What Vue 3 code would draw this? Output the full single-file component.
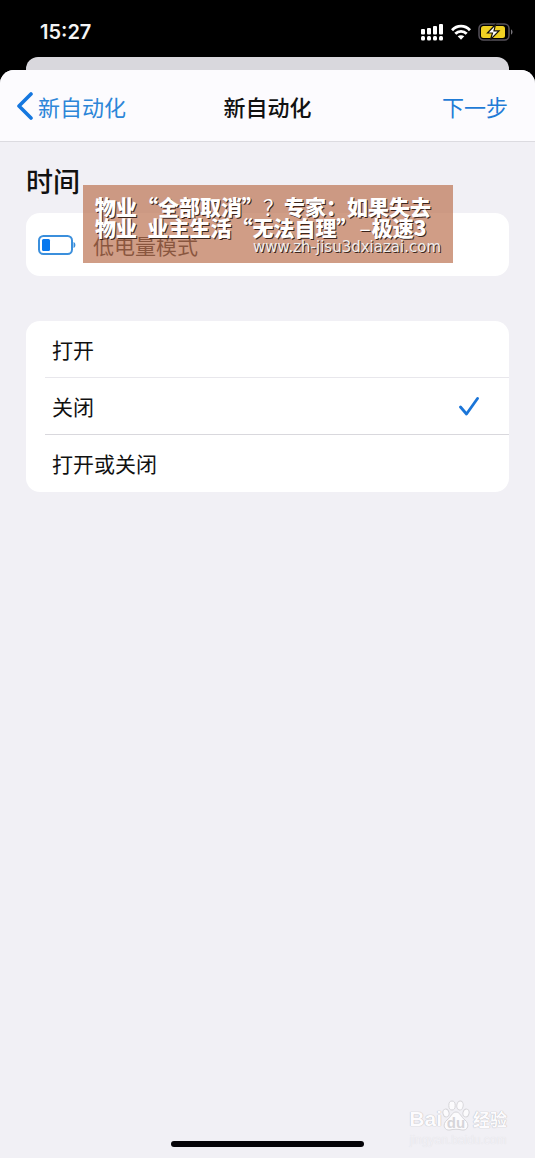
<script setup>
import { ref } from 'vue'

const options = [
  { value: 'on', label: '打开' },
  { value: 'off', label: '关闭' },
  { value: 'either', label: '打开或关闭' },
]
const selected = ref('off')
</script>

<template>
  <div class="screen" lang="zh-CN">
    <header class="status">
      <span class="clock">15:27</span>
      <div class="indicators">
        <svg width="24" height="18" viewBox="0 0 24 18" fill="#fff" aria-hidden="true">
          <rect x="1" y="6" width="4" height="5.500" rx="1" />
          <rect x="7" y="5" width="4" height="6.500" rx="1" />
          <rect x="13" y="3" width="4" height="8.500" rx="1" />
          <rect x="19" y="1" width="4" height="10.500" rx="1" />
          <rect x="1" y="13" width="4" height="4.500" rx="1.500" />
          <rect x="7" y="13" width="4" height="4.500" rx="1.500" />
          <rect x="13" y="13" width="4" height="4.500" rx="1.500" />
          <rect x="19" y="13" width="4" height="4.500" rx="1.500" />
        </svg>
        <svg width="20" height="16" viewBox="0 0 20 16" fill="none" stroke="#fff" stroke-width="2.900" aria-hidden="true">
          <path d="M1 6.200C6 0.800 14 0.800 19 6.200" />
          <path d="M4.300 9.800C7.600 6.600 12.400 6.600 15.700 9.800" />
          <path d="M10 15.800L6.700 12.300C8.700 10.800 11.300 10.800 13.300 12.300Z" fill="#fff" stroke="none" />
        </svg>
        <svg width="36" height="18" viewBox="0 0 36 18" aria-hidden="true">
          <rect x="1" y="1" width="30" height="16" rx="4.500" fill="none" stroke="#56515a" stroke-width="1.500" />
          <rect x="3" y="3" width="24" height="12" rx="2.500" fill="#f0d123" />
          <path d="M33 6.500C35 7 35 11 33 11.500Z" fill="#77747a" />
          <path d="M17.500 1.500L9.500 10H14.500L12.500 16.500L21 7.800H16Z" fill="#fff" stroke="#171309" stroke-width="1.200" />
        </svg>
      </div>
    </header>
    <div class="backing"></div>

    <main class="sheet">
      <nav class="bar">
        <button class="nav back" type="button">
          <svg width="18" height="28" viewBox="0 0 18 28" fill="none" stroke="#1577df" stroke-width="3.600" stroke-linecap="round" stroke-linejoin="round" aria-hidden="true">
            <path d="M15 2L3 14L15 26" />
          </svg>
          <span>新自动化</span>
        </button>
        <h1>新自动化</h1>
        <button class="nav next" type="button">下一步</button>
      </nav>

      <div class="content">
        <section class="trigger">
          <h2>时间</h2>
          <div class="card mode">
            <svg width="38" height="20" viewBox="0 0 38 20" aria-hidden="true">
              <rect x="1" y="1" width="33" height="18" rx="4.500" fill="none" stroke="#3b8fdc" stroke-width="2" />
              <rect x="4" y="4" width="8" height="12" rx="1.500" fill="#0878ee" />
              <path d="M35.500 7C38 7.500 38 12.500 35.500 13Z" fill="#3b8fdc" />
            </svg>
            <span>低电量模式</span>
          </div>
          <div class="banner">
            <p>物业“全部取消”<span class="light">？</span>专家：如果失去</p>
            <p>物业&ensp;业主生活“无法自理”<span class="light dash">–</span>极速3</p>
            <p class="site">www.zh-jisu3dxiazai.com</p>
          </div>
        </section>

        <fieldset class="card options">
          <label v-for="option in options" :key="option.value" class="option">
            <input v-model="selected" type="radio" name="state" :value="option.value" />
            <span>{{ option.label }}</span>
            <svg v-if="selected === option.value" width="20" height="20" viewBox="0 0 20 20" fill="none" stroke="#1b75d8" stroke-width="2.800" stroke-linecap="round" stroke-linejoin="round" aria-hidden="true">
              <path d="M1.500 11L7.500 18L18.500 2.500" />
            </svg>
          </label>
        </fieldset>
      </div>

      <div class="watermark">
        <div class="brand">
          <span>Bai</span>
          <svg width="28" height="32" viewBox="0 0 28 32" fill="#fcfbfd" stroke="#d6d5d9" stroke-width="1" aria-hidden="true">
            <ellipse cx="4" cy="13" rx="3" ry="4" transform="rotate(-15 4 13)" />
            <ellipse cx="10" cy="5.500" rx="3.200" ry="4.500" />
            <ellipse cx="18" cy="5.500" rx="3.200" ry="4.500" transform="rotate(8 18 5.500)" />
            <ellipse cx="24" cy="13" rx="3" ry="4" transform="rotate(15 24 13)" />
            <path d="M14 12C10 12 9 17 5 20C0 24 2 31 8 30C12 29 16 29 20 30C26 31 28 24 23 20C19 17 18 12 14 12Z" />
            <text x="14" y="28" text-anchor="middle" class="du">du</text>
          </svg>
          <span class="cn">经验</span>
        </div>
        <div class="domain">jingyan.baidu.com</div>
      </div>
      <div class="home"></div>
    </main>
  </div>
</template>

<style>
body {
  margin: 0;
  background: #000;
}
</style>

<style scoped>
.screen {
  display: flex;
  flex-direction: column;
  min-height: 100vh;
  background: #000;
  color: #111;
  font-family: "Noto Sans CJK SC", sans-serif;
}
.status {
  display: flex;
  align-items: center;
  justify-content: space-between;
  height: 57px;
  box-sizing: border-box;
  padding: 6px 21px 0 40px;
}
.clock {
  color: #f4f4f4;
  font: 600 20px/24px Inter, sans-serif;
}
.indicators {
  display: flex;
  align-items: center;
  gap: 7px;
}
.backing {
  height: 13px;
  margin: 0 26px;
  border-radius: 12px 12px 0 0;
  background: #d9d8dd;
}
.sheet {
  position: relative;
  display: flex;
  flex: 1;
  flex-direction: column;
  overflow: hidden;
  border-radius: 14px 14px 0 0;
  background: #f1f0f5;
}
.bar {
  display: grid;
  grid-template-columns: 1fr auto 1fr;
  align-items: center;
  height: 72px;
  box-sizing: border-box;
  padding: 0 16px;
  border-bottom: 1px solid #dcdbe0;
  background: #fcfbfe;
}
.nav {
  display: flex;
  align-items: center;
  padding: 0;
  border: 0;
  background: none;
  color: #2c86d8;
  font: 400 22px/32px "Noto Sans CJK SC", sans-serif;
}
.back {
  gap: 4px;
}
.next {
  justify-self: end;
  padding-right: 11px;
  color: #1f7bd6;
}
h1 {
  margin: 0;
  font-size: 22px;
  font-weight: 500;
  line-height: 32px;
}
.content {
  display: flex;
  flex: 1;
  flex-direction: column;
  gap: 45px;
  padding: 19px 26px 0;
}
.trigger {
  position: relative;
}
h2 {
  margin: 0 0 12px;
  font-size: 27px;
  font-weight: 500;
  line-height: 40px;
}
.card {
  border-radius: 14px;
  background: #fff;
}
.mode {
  display: flex;
  align-items: center;
  gap: 17px;
  height: 63px;
  padding-left: 12px;
  font-size: 21px;
}
.mode span {
  line-height: 30px;
}
.banner {
  position: absolute;
  top: 24px;
  left: 57px;
  width: 370px;
  height: 78px;
  box-sizing: border-box;
  padding: 11px 12px;
  background: rgba(188, 115, 83, 0.7);
  color: #fff;
  font-size: 21px;
  font-weight: 900;
  line-height: 21px;
  white-space: nowrap;
  text-shadow: 1px 1px 0 #3a241b;
}
.banner p {
  margin: 0;
}
.light {
  font-weight: 400;
}
.dash {
  margin: 0 1px 0 2px;
}
.banner .site {
  color: #eee;
  font: 400 15px/18px "DejaVu Sans", sans-serif;
  text-align: right;
}
.options {
  min-width: 0;
  margin: 0;
  padding: 0 0 0 19px;
  border: 0;
}
.option {
  display: flex;
  align-items: center;
  justify-content: space-between;
  height: 56px;
  padding: 0 30px 0 7px;
  border-bottom: 1px solid #d9d8dd;
  font-size: 21px;
}
.option:first-child {
  border-color: #e8e7ec;
}
.option:last-child {
  border-color: transparent;
}
.option input {
  position: absolute;
  opacity: 0;
}
.watermark {
  position: absolute;
  right: 28px;
  bottom: 10px;
  color: #fcfbfd;
  text-shadow: 0 0 1px #bdbcc1, 0 0 1px #bdbcc1;
}
.brand {
  display: flex;
  align-items: flex-end;
  font: 700 21px/26px "Liberation Sans", sans-serif;
}
.brand .cn {
  margin-left: 3px;
  font: 700 17px/26px "Noto Sans CJK SC", sans-serif;
}
.du {
  fill: #d6d5d9;
  stroke: none;
  font: 700 15px "Liberation Sans", sans-serif;
  text-shadow: none;
}
.domain {
  color: #f1f0f5;
  font: 400 12px/16px "Liberation Sans", sans-serif;
  text-align: center;
  text-shadow: 0 0 1px #dddce0;
}
.home {
  width: 36%;
  height: 6px;
  margin: 0 auto 11px;
  border-radius: 3px;
  background: #050408;
}
</style>
